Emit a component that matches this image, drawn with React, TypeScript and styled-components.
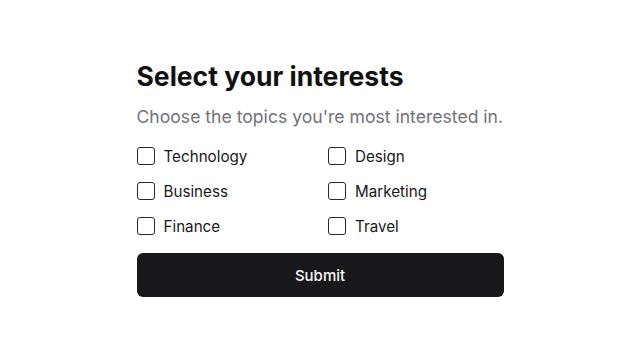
import React from 'react'
import { createGlobalStyle, styled } from 'styled-components'

const GlobalStyle = createGlobalStyle`
  * { box-sizing: border-box; }
  html, body { margin: 0; padding: 0; background: #ffffff; }
  body { font-family: Inter, "Noto Sans", sans-serif; color: #18181b; }
`

const Page = styled.div`
  min-height: 357px;
  display: flex;
  justify-content: center;
  padding-top: 60px;
`

const Form = styled.form`
  width: 367px;
  display: flex;
  flex-direction: column;
`

const Title = styled.h1`
  margin: 0;
  font-size: 26.5px;
  line-height: 32px;
  font-weight: 700;
  color: #111113;
`

const Subtitle = styled.p`
  margin: 13px 0 0;
  font-size: 17.6px;
  line-height: 24px;
  color: #71717a;
`

const Options = styled.div`
  margin-top: 15px;
  display: grid;
  grid-template-columns: 1fr 1fr;
  column-gap: 16px;
  row-gap: 11px;
`

const Option = styled.label`
  display: flex;
  align-items: center;
  gap: 9px;
  height: 24px;
  font-size: 15.2px;
  color: #18181b;
  cursor: pointer;
`

const Box = styled.input`
  appearance: none;
  margin: 0;
  width: 18px;
  height: 18px;
  border: 1.5px solid #27272a;
  border-radius: 3px;
  background: #fff;
`

const SubmitButton = styled.button`
  margin-top: 15px;
  height: 44px;
  border: none;
  border-radius: 6px;
  background: #18181b;
  color: #fafafa;
  font-family: inherit;
  font-size: 15px;
  font-weight: 500;
`

const topics = ['Technology', 'Design', 'Business', 'Marketing', 'Finance', 'Travel']

export default function App() {
  return (
    <>
      <GlobalStyle />
      <Page>
        <Form onSubmit={e => e.preventDefault()}>
          <Title>Select your interests</Title>
          <Subtitle>Choose the topics you're most interested in.</Subtitle>
          <Options>
            {topics.map(t => (
              <Option key={t}>
                <Box type="checkbox" />
                {t}
              </Option>
            ))}
          </Options>
          <SubmitButton type="submit">Submit</SubmitButton>
        </Form>
      </Page>
    </>
  )
}
